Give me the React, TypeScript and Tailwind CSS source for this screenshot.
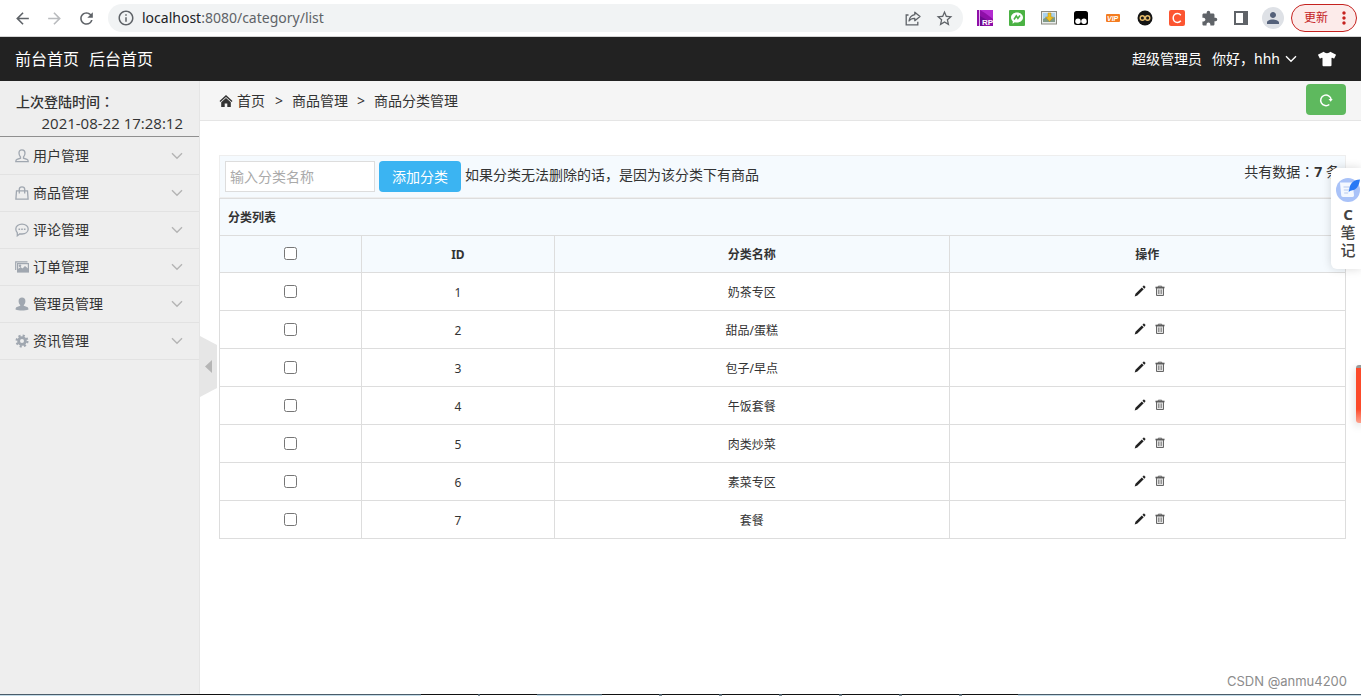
import type { ReactNode } from "react";
import {
  MdArrowBack,
  MdArrowForward,
  MdRefresh,
  MdInfoOutline,
  MdStarOutline,
  MdExtension,
  MdPerson,
  MdMoreVert,
} from "react-icons/md";
import { FaTshirt } from "react-icons/fa";

const categories = ["奶茶专区", "甜品/蛋糕", "包子/早点", "午饭套餐", "肉类炒菜", "素菜专区", "套餐"];

/* Full-width colon set in the middle of its square. */
function Colon() {
  return <span className="font-['Noto_Sans_CJK_TC',sans-serif]">：</span>;
}

function ShareIcon() {
  return (
    <svg viewBox="0 0 16 16" className="size-4" fill="none" stroke="#5f6368" strokeWidth="1.3">
      <path d="M3.5 5H1.2v9.8h11.6v-3" />
      <path d="M9.8 2.2l5.2 4.3-5.2 4.2V8.3C7.300 8.200 5.400 9 4 11c.5-3.500 2.500-5.700 5.800-6.300z" strokeLinejoin="round" />
    </svg>
  );
}

function RpIcon() {
  return (
    <svg viewBox="0 0 16 16" className="size-4">
      <rect width="16" height="16" fill="#8e0fa8" />
      <path d="M3 0h13v9L8 3z" fill="#b32bd0" />
      <path d="M3 16V6l7 4-4 6z" fill="#6d0a90" />
      <rect x="2" width="1" height="16" fill="#e4b5ee" />
      <text x="5" y="15" fontSize="8" fontWeight="700" fill="#fff" fontFamily="Liberation Sans">RP</text>
    </svg>
  );
}

function ChatIcon() {
  return (
    <svg viewBox="0 0 16 16" className="size-4">
      <rect width="16" height="16" rx="1" fill="#4bb244" />
      <path d="M8 2.500c3.400 0 6 2.200 6 5s-2.600 5-6 5c-.8 0-1.500-.1-2.200-.3L3.600 13.800l.2-2.600C2.700 10.300 2 9 2 7.500c0-2.800 2.600-5 6-5z" fill="#fff" />
      <path d="M5 9.500L7.300 6l1.600 2.400L11 5.500" fill="none" stroke="#4bb244" strokeWidth="1.600" />
    </svg>
  );
}

function PictureSaveIcon() {
  return (
    <svg viewBox="0 0 16 14" className="h-[14px] w-4">
      <rect x=".5" y=".5" width="15" height="12.500" fill="#e9ecec" stroke="#8a8a80" />
      <rect x="2" y="2" width="12" height="6" fill="#a9d2ee" />
      <path d="M2 8l4-2 3 2 5-2v5H2z" fill="#7f9a86" />
      <path d="M7 2h3v4h2.500L8.500 10.500 4.500 6H7z" fill="#f0c022" stroke="#b68a10" strokeWidth=".5" />
    </svg>
  );
}

function MonkeyIcon() {
  return (
    <svg viewBox="0 0 14 14" className="size-[14px]">
      <rect width="14" height="14" rx="2.500" fill="#000" />
      <circle cx="4" cy="10.300" r="2.700" fill="#fff" />
      <circle cx="10" cy="10.300" r="2.700" fill="#fff" />
    </svg>
  );
}

function VipIcon() {
  return (
    <svg viewBox="0 0 14 8" className="h-2 w-[14px]">
      <rect width="14" height="8" rx="1" fill="#f47c20" />
      <text x="1" y="6.500" fontSize="7" fontWeight="700" fontStyle="italic" fill="#fff" fontFamily="Liberation Sans">VIP</text>
    </svg>
  );
}

function InfinityIcon() {
  return (
    <svg viewBox="0 0 16 16" className="size-4">
      <circle cx="8" cy="8" r="7.500" fill="#141414" />
      <g fill="none" stroke="#e3b96a" strokeWidth="1.400">
        <circle cx="5.400" cy="8" r="2.200" />
        <circle cx="10.600" cy="8" r="2.200" />
      </g>
    </svg>
  );
}

function CIcon() {
  return (
    <svg viewBox="0 0 16 16" className="size-4">
      <rect width="16" height="16" rx="2" fill="#fc5531" />
      <path d="M11.800 5.200C11 4.200 9.800 3.600 8.500 3.600 6 3.600 4.200 5.500 4.200 8s1.800 4.400 4.300 4.400c1.300 0 2.500-.6 3.300-1.600" fill="none" stroke="#fff" strokeWidth="1.500" />
    </svg>
  );
}

function PanelIcon() {
  return (
    <svg viewBox="0 0 14 14" className="size-[14px]">
      <rect width="14" height="14" fill="#5f6368" />
      <rect x="2" y="2" width="7" height="10" fill="#fff" />
    </svg>
  );
}

const menuGlyph = "h-[14px] w-[14px] shrink-0";

const menu: { label: string; icon: ReactNode }[] = [
  {
    label: "用户管理",
    icon: (
      <svg viewBox="0 0 14 14" className={menuGlyph} fill="none" stroke="#a0a7b0" strokeWidth="1.300">
        <path d="M5.500 8C4.300 6.800 4 5.500 4 4c0-2 1.200-3.200 3-3.200S10 2 10 4c0 1.500-.3 2.800-1.500 4v1.200l3.500 1.200c.9.300 1.200.9 1.200 2.200H.8c0-1.300.3-1.900 1.200-2.200l3.500-1.200z" />
      </svg>
    ),
  },
  {
    label: "商品管理",
    icon: (
      <svg viewBox="0 0 14 14" className={menuGlyph} fill="none" stroke="#a0a7b0" strokeWidth="1.300">
        <path d="M1.500 4.800h11l.6 8.400H.9z" />
        <path d="M4.300 7.500V3.200C4.300 1.600 5.500.8 7 .8s2.700.8 2.700 2.400v4.300" />
      </svg>
    ),
  },
  {
    label: "评论管理",
    icon: (
      <svg viewBox="0 0 14 14" className={menuGlyph} fill="none" stroke="#a0a7b0" strokeWidth="1.300">
        <path d="M7 1.200c3.500 0 6.200 2.100 6.200 4.900S10.500 11 7 11c-.7 0-1.300 0-2-.2L2.300 12.800v-3C1.300 8.800.8 7.600.8 6.100.8 3.300 3.500 1.200 7 1.200z" />
        <path d="M3.500 6.200h1.600M6.200 6.200h1.600M8.900 6.200h1.600" strokeWidth="1.600" />
      </svg>
    ),
  },
  {
    label: "订单管理",
    icon: (
      <svg viewBox="0 0 14 14" className={menuGlyph} fill="none" stroke="#a0a7b0" strokeWidth="1.200">
        <path d="M.7 10V1.800h11.800" />
        <rect x="2.600" y="3.600" width="10.800" height="8.400" />
        <path d="M3 11.500V9.800l2.500-2 2 1.500L10 6.800l3 2.500v2.200z" fill="#a0a7b0" />
        <circle cx="5" cy="5.800" r=".7" fill="#a0a7b0" />
      </svg>
    ),
  },
  {
    label: "管理员管理",
    icon: (
      <svg viewBox="0 0 14 14" className={menuGlyph} fill="#a0a7b0">
        <path d="M7 .5c2.200 0 3.400 1.400 3.400 3.400 0 1.600-.5 3.100-1.600 4.100v.8l3.300 1.200c.9.300 1.400 1.300 1.400 2.500-1.800.7-4 1-6.500 1s-4.700-.3-6.500-1c0-1.200.5-2.200 1.400-2.500l3.300-1.200V8C4.100 7 3.600 5.500 3.600 3.900 3.600 1.900 4.800.5 7 .5z" />
      </svg>
    ),
  },
  {
    label: "资讯管理",
    icon: (
      <svg viewBox="0 0 14 14" className={menuGlyph} fill="none" stroke="#a0a7b0">
        <circle cx="7" cy="7" r="3.400" strokeWidth="2.800" />
        <circle cx="7" cy="7" r="5.400" strokeWidth="2.200" strokeDasharray="2.120 2.120" />
      </svg>
    ),
  },
];

/* Strip along the bottom edge: alternating idle and open window slots. */
const strip = [
  "w-[180px] border-[#4a5c69] bg-[#c3dbe8]",
  "w-[50px] border-[#111] bg-white",
  "w-[191px] border-[#4a5c69] bg-[#c3dbe8]",
  "w-[57px] border-[#111] bg-white",
  "w-[2px] border-[#4a5c69] bg-[#7c8a94]",
  "w-[57px] border-[#111] bg-white",
  "w-[65px] border-[#4a5c69] bg-[#c3dbe8]",
  "w-[57px] border-[#111] bg-white",
  "w-[3px] border-[#4a5c69] bg-[#7c8a94]",
  "w-[57px] border-[#111] bg-white",
  "w-[3px] border-[#4a5c69] bg-[#7c8a94]",
  "w-[57px] border-[#111] bg-white",
  "w-[3px] border-[#4a5c69] bg-[#7c8a94]",
  "w-[57px] border-[#111] bg-white",
  "w-[3px] border-[#4a5c69] bg-[#7c8a94]",
  "w-[57px] border-[#111] bg-white",
  "w-[3px] border-[#4a5c69] bg-[#7c8a94]",
  "w-[57px] border-[#111] bg-white",
  "w-[3px] border-[#4a5c69] bg-[#7c8a94]",
  "w-[56px] border-[#111] bg-white",
  "flex-1 border-[#4a5c69] bg-[#c3dbe8]",
];

function Chevron({ className }: { className: string }) {
  return (
    <svg viewBox="0 0 12 8" className={className} fill="none" stroke="currentColor" strokeWidth="1.400">
      <path d="M1 1.200l5 5 5-5" />
    </svg>
  );
}

function HomeIcon() {
  return (
    <svg viewBox="0 0 14 14" className="size-[14px]" fill="#333">
      <path d="M7 1l6.500 6-.9 1L7 2.900 1.400 8l-.9-1z" />
      <path d="M7 4l4.800 4.300V13H8.300V9.500H5.700V13H2.200V8.300z" />
    </svg>
  );
}

function PencilIcon() {
  return (
    <svg viewBox="0 0 12 12" className="size-3" fill="#222">
      <path d="M9.300.9c.4-.4.8-.4 1.200 0l.7.700c.4.400.4.800 0 1.200l-.9.900-1.900-1.900z" />
      <path d="M7.800 2.400l1.900 1.900-6.300 6.300L.7 11.500l.8-2.800z" />
    </svg>
  );
}

function TrashIcon() {
  return (
    <svg viewBox="0 0 12 12" className="size-3" fill="none" stroke="#666">
      <path d="M1.500 2.500h9" strokeWidth="1.600" stroke="#555" />
      <path d="M4.300 2V1.200h3.400V2" />
      <path d="M2.500 3v7.500h7V3z" fill="#e2e2e2" />
      <path d="M4.800 4.500v4.500M7.200 4.500v4.500" strokeWidth=".9" />
    </svg>
  );
}

function NoteIcon() {
  return (
    <svg viewBox="0 0 24 24" className="size-6">
      <circle cx="12" cy="12" r="12" fill="#a9c2f8" />
      <path d="M4 4.500h12.500l1.500 12.500c.1 1.200-.5 2-1.500 2H7c-1 0-1.700-.7-1.800-1.700z" fill="#f4f8ff" />
      <path d="M7.500 9h6M7.800 12h6M8.200 15h4" stroke="#b6c8ee" strokeWidth="1.200" />
      <path d="M24 1.500c-6.500.3-10.500 4-10.800 10.500L12.500 14l2-1.300C20.500 12.300 23 8 24 1.500z" fill="#2878f5" />
    </svg>
  );
}

function BrowserBar() {
  return (
    <div className="flex h-[37px] shrink-0 items-center border-b border-[#d5d5d5] bg-white pr-1 pl-[13px] text-[#5f6368]">
      <button aria-label="后退"><MdArrowBack size={19} /></button>
      <button aria-label="前进" className="ml-[13px] text-[#b9bbbe]"><MdArrowForward size={19} /></button>
      <button aria-label="刷新" className="ml-[13px]"><MdRefresh size={19} /></button>
      <div className="ml-3 flex h-7 flex-1 items-center rounded-full bg-[#f1f3f4] px-[9px]">
        <MdInfoOutline size={18} />
        <span className="ml-[7px] flex-1 text-sm text-[#5f6368]">
          <span className="text-[#202124]">localhost</span>:8080/category/list
        </span>
        <button aria-label="分享"><ShareIcon /></button>
        <button aria-label="收藏" className="ml-[14px]"><MdStarOutline size={19} /></button>
      </div>
      <div className="ml-[14px] flex items-center">
        <span className="flex w-8"><RpIcon /></span>
        <span className="flex w-8"><ChatIcon /></span>
        <span className="flex w-8"><PictureSaveIcon /></span>
        <span className="flex w-8 pl-px"><MonkeyIcon /></span>
        <span className="flex w-8 pl-px"><VipIcon /></span>
        <span className="flex w-8"><InfinityIcon /></span>
        <span className="flex w-8"><CIcon /></span>
        <span className="flex w-8"><MdExtension size={17} /></span>
        <span className="flex w-[29px] pl-px"><PanelIcon /></span>
      </div>
      <span className="flex size-[22px] items-center justify-center rounded-full bg-[#dee1e6] text-[#54617a]">
        <MdPerson size={18} />
      </span>
      <button className="ml-[7px] flex h-7 items-center rounded-full border border-[#c5221f] bg-[#fcebea] pl-3 text-xs text-[#c5221f]">
        更新
        <MdMoreVert size={20} className="mr-[2px] ml-[6px]" />
      </button>
    </div>
  );
}

export default function App() {
  return (
    <div className="relative flex min-h-screen flex-col overflow-hidden bg-white font-['Noto_Sans','Noto_Sans_CJK_SC',sans-serif] text-sm text-[#333]">
      <BrowserBar />

      <header className="flex h-11 shrink-0 items-center bg-[#222] pr-[25px] pl-[15px] text-white">
        <nav className="flex flex-1 gap-[10px] text-base">
          <a href="#front">前台首页</a>
          <a href="#admin">后台首页</a>
        </nav>
        <span>超级管理员</span>
        <button className="ml-[10px] flex items-center">
          你好，hhh
          <Chevron className="ml-[5px] h-2 w-3" />
        </button>
        <button aria-label="换肤" className="ml-[21px]"><FaTshirt size={18} /></button>
      </header>

      <div className="flex flex-1">
        <aside className="w-[200px] shrink-0 border-r border-[#e5e5e5] bg-[#eee]">
          <div className="h-14 border-b border-[#8f8f8f] px-4 pt-[9px] leading-[22px]">
            <p className="font-medium">上次登陆时间<Colon /></p>
            <p className="text-right font-['Open_Sans','Noto_Sans',sans-serif] text-[15px] leading-5">2021-08-22 17:28:12</p>
          </div>
          <ul className="pt-px">
            {menu.map((m) => (
              <li key={m.label} className="border-b border-[#e2e2e2]">
                <button className="flex h-9 w-full items-center pr-4 pl-[15px]">
                  {m.icon}
                  <span className="ml-1 flex-1 text-left">{m.label}</span>
                  <Chevron className="h-2 w-3 text-[#b4b4b4]" />
                </button>
              </li>
            ))}
          </ul>
        </aside>

        <main className="min-w-0 flex-1">
          <div className="flex h-10 items-center gap-[9px] border-b border-[#e5e5e5] bg-[#f5f5f5] pr-[15px] pl-[19px]">
            <a href="#home" className="flex items-center gap-1 pr-px"><HomeIcon />首页</a>
            <span>&gt;</span>
            <span>商品管理</span>
            <span>&gt;</span>
            <span>商品分类管理</span>
            <button aria-label="刷新" className="mb-[2px] ml-auto flex h-[31px] w-10 items-center justify-center rounded-[4px] bg-[#5eb95e]">
              <svg viewBox="0 0 14 14" className="size-[14px]" fill="none" stroke="#fff" strokeWidth="1.500">
                <path d="M10.300 11.500A5.300 5.300 0 1 1 12.200 6.500" />
                <path d="M9.500 6h4.200l-2 2.800z" fill="#fff" stroke="none" />
              </svg>
            </button>
          </div>

          <div className="pt-[34px] pr-[15px] pl-[19px]">
            <div className="flex h-[43px] items-center border border-[#eee] bg-[#f5fafe] px-[5px]">
              <input
                aria-label="分类名称"
                placeholder="输入分类名称"
                className="h-[31px] w-[150px] border border-[#ddd] bg-white px-1 placeholder:text-[#aaa]"
              />
              <button className="ml-1 h-[31px] rounded-[4px] bg-[#3bb4f2] px-[13px] text-white">添加分类</button>
              <span className="mb-1 ml-1">如果分类无法删除的话，是因为该分类下有商品</span>
              <span className="mb-[10px] ml-auto">共有数据<Colon /><strong>7</strong> 条</span>
            </div>
            <table className="w-full table-fixed border-collapse text-center text-xs">
              <colgroup>
                <col className="w-[12.6%]" />
                <col className="w-[17.15%]" />
                <col className="w-[35.05%]" />
                <col />
              </colgroup>
              <thead className="bg-[#f5fafe] font-bold">
                <tr className="h-[37px]">
                  <th colSpan={4} className="border border-[#ddd] px-2 pt-[2px] text-left">分类列表</th>
                </tr>
                <tr className="h-[37px]">
                  <th className="border border-[#ddd] pb-[2px]">
                    <input type="checkbox" aria-label="全选" className="mx-auto block size-[13px]" />
                  </th>
                  <th className="border border-[#ddd] pt-[2px]">ID</th>
                  <th className="border border-[#ddd] pt-[2px]">分类名称</th>
                  <th className="border border-[#ddd] pt-[2px]">操作</th>
                </tr>
              </thead>
              <tbody>
                {categories.map((name, i) => (
                  <tr key={name} className="h-[38px]">
                    <td className="border border-[#ddd]">
                      <input type="checkbox" aria-label={name} className="mx-auto block size-[13px]" />
                    </td>
                    <td className="border border-[#ddd] pt-[2px]">{i + 1}</td>
                    <td className="border border-[#ddd] pt-[2px]">{name}</td>
                    <td className="border border-[#ddd] pb-[2px]">
                      <div className="flex justify-center gap-2 pl-[6px]">
                        <button aria-label="编辑"><PencilIcon /></button>
                        <button aria-label="删除"><TrashIcon /></button>
                      </div>
                    </td>
                  </tr>
                ))}
              </tbody>
            </table>
          </div>
        </main>
      </div>

      <button aria-label="收起侧栏" className="absolute top-[336px] left-[200px]">
        <svg viewBox="0 0 17 61" className="h-[61px] w-[17px]">
          <path d="M0 0l17 9v43L0 61z" fill="#e6e6e6" />
          <path d="M12 24v13L5 30.500z" fill="#b5b5b5" />
        </svg>
      </button>

      <aside className="absolute top-[168px] right-0 flex w-[30px] flex-col items-center rounded-l-md bg-white pt-[10px] pb-[10px] pl-1 shadow-[0_0_10px_rgba(0,0,0,0.15)]">
        <NoteIcon />
        <span className="mt-[3px] w-4 text-center text-[15px] leading-[18px] font-medium text-[#444]">
          <b>C</b> 笔 记
        </span>
      </aside>

      <div className="absolute top-[365px] right-0 h-[58px] w-[5px] rounded-l-[3px] border-t-[3px] border-[#999] bg-linear-to-b from-[#fc4a2a] from-75% to-[#fca08c] shadow-[0_3px_8px_rgba(0,0,0,0.2)]" />

      <span className="absolute right-[14px] bottom-[5px] font-['Inter',sans-serif] text-[13px] text-[#8c8c8c]">
        CSDN @anmu4200
      </span>

      <div className="flex h-[2px] shrink-0">
        {strip.map((slot, i) => (
          <span key={i} className={`border-t ${slot}`} />
        ))}
      </div>
    </div>
  );
}
